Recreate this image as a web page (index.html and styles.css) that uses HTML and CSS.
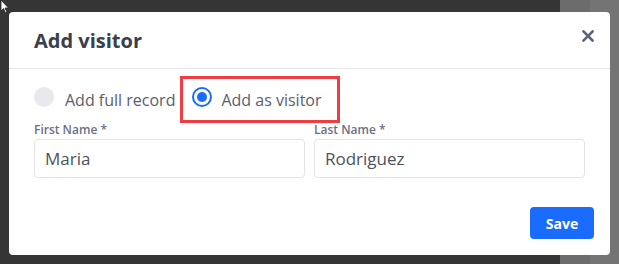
FILE: index.html
```html
<!DOCTYPE html>
<html lang="en">
<head>
    <meta charset="UTF-8">
    <meta name="viewport" content="width=device-width, initial-scale=1.0">
    <title>Add visitor</title>
    <link rel="stylesheet" href="styles.css">
</head>
<body>
    <svg class="cursor" width="10" height="14" viewBox="0 0 10 14">
        <path d="M1 0 L1 11 L3.5 8.5 L5.5 13 L7 12.3 L5 8 L8.5 8 Z" fill="#ffffff" stroke="#222" stroke-width="0.8"/>
    </svg>

    <div class="modal">
        <div class="modal__header">
            <h2 class="modal__title">Add visitor</h2>
            <button class="modal__close" aria-label="Close">
                <svg width="12" height="12" viewBox="0 0 12 12">
                    <path d="M1.5 1.5 L10.5 10.5 M10.5 1.5 L1.5 10.5" stroke="#5d6479" stroke-width="2.6" stroke-linecap="square"/>
                </svg>
            </button>
        </div>

        <div class="modal__body">
            <div class="radio-row">
                <label class="radio">
                    <span class="radio__dot"></span>
                    <span class="radio__text">Add full record</span>
                </label>
                <label class="radio radio--checked radio--highlight">
                    <span class="radio__dot"></span>
                    <span class="radio__text">Add as visitor</span>
                </label>
            </div>

            <div class="fields">
                <div class="field">
                    <label class="field__label">First Name *</label>
                    <div class="field__input">Maria</div>
                </div>
                <div class="field">
                    <label class="field__label">Last Name *</label>
                    <div class="field__input">Rodriguez</div>
                </div>
            </div>
        </div>

        <div class="modal__footer">
            <button class="save-button">Save</button>
        </div>
    </div>
</body>
</html>
```

FILE: styles.css
```css
* {
    margin: 0;
    padding: 0;
    box-sizing: border-box;
    font-family: 'Open Sans', 'Noto Sans', sans-serif;
}

body {
    width: 619px;
    height: 264px;
    overflow: hidden;
    padding: 12px 9px 9px 9px;
    background: linear-gradient(to right, #353535 0, #353535 560px, #6c6c6c 560px, #6c6c6c 590px, #747474 590px);
    position: relative;
}

.cursor {
    position: absolute;
    left: 0;
    top: 0;
}

.modal {
    width: 601px;
    height: 243px;
    background: #ffffff;
    border-radius: 4px;
    display: flex;
    flex-direction: column;
}

.modal__header {
    height: 57px;
    padding: 0 16px 0 25px;
    display: flex;
    align-items: center;
    justify-content: space-between;
    border-bottom: 1px solid #e6e7e9;
}

.modal__title {
    font-size: 20px;
    font-weight: 700;
    color: #3a404b;
}

.modal__close {
    border: none;
    background: none;
    width: 12px;
    height: 12px;
    display: flex;
    margin-top: -9px;
}

.modal__body {
    padding: 7px 25px 0 25px;
}

.radio-row {
    display: flex;
    align-items: center;
    gap: 5px;
}

.radio {
    display: flex;
    align-items: center;
    gap: 11px;
    height: 47px;
    font-size: 16px;
    color: #5b606b;
}

.radio__dot {
    width: 20px;
    height: 20px;
    border-radius: 50%;
    background: #e8e9ed;
    margin-top: -5px;
}

.radio--checked .radio__dot {
    background: #ffffff;
    border: 2px solid #1a6cff;
    display: flex;
    align-items: center;
    justify-content: center;
}

.radio--checked .radio__dot::after {
    content: '';
    width: 10px;
    height: 10px;
    border-radius: 50%;
    background: #1a6cff;
}

.radio--highlight {
    border: 3px solid #ef3e42;
    padding: 0 15px 0 9px;
    gap: 9px;
}

.fields {
    display: grid;
    grid-template-columns: 271px 271px;
    gap: 9px;
    margin-top: -2px;
}

.field__label {
    display: block;
    font-size: 12px;
    font-weight: 600;
    color: #6b7183;
    line-height: 18px;
    margin-bottom: 0;
}

.field__input {
    height: 39px;
    border: 1px solid #e2e4e8;
    border-radius: 4px;
    padding: 0 10px;
    display: flex;
    align-items: center;
    font-size: 17px;
    color: #4e525b;
}

.modal__footer {
    margin-top: auto;
    padding: 0 16px 16px 0;
    display: flex;
    justify-content: flex-end;
}

.save-button {
    width: 64px;
    height: 32px;
    border: none;
    border-radius: 4px;
    background: #1a6cff;
    color: #ffffff;
    font-size: 14px;
    font-weight: 700;
}
```
